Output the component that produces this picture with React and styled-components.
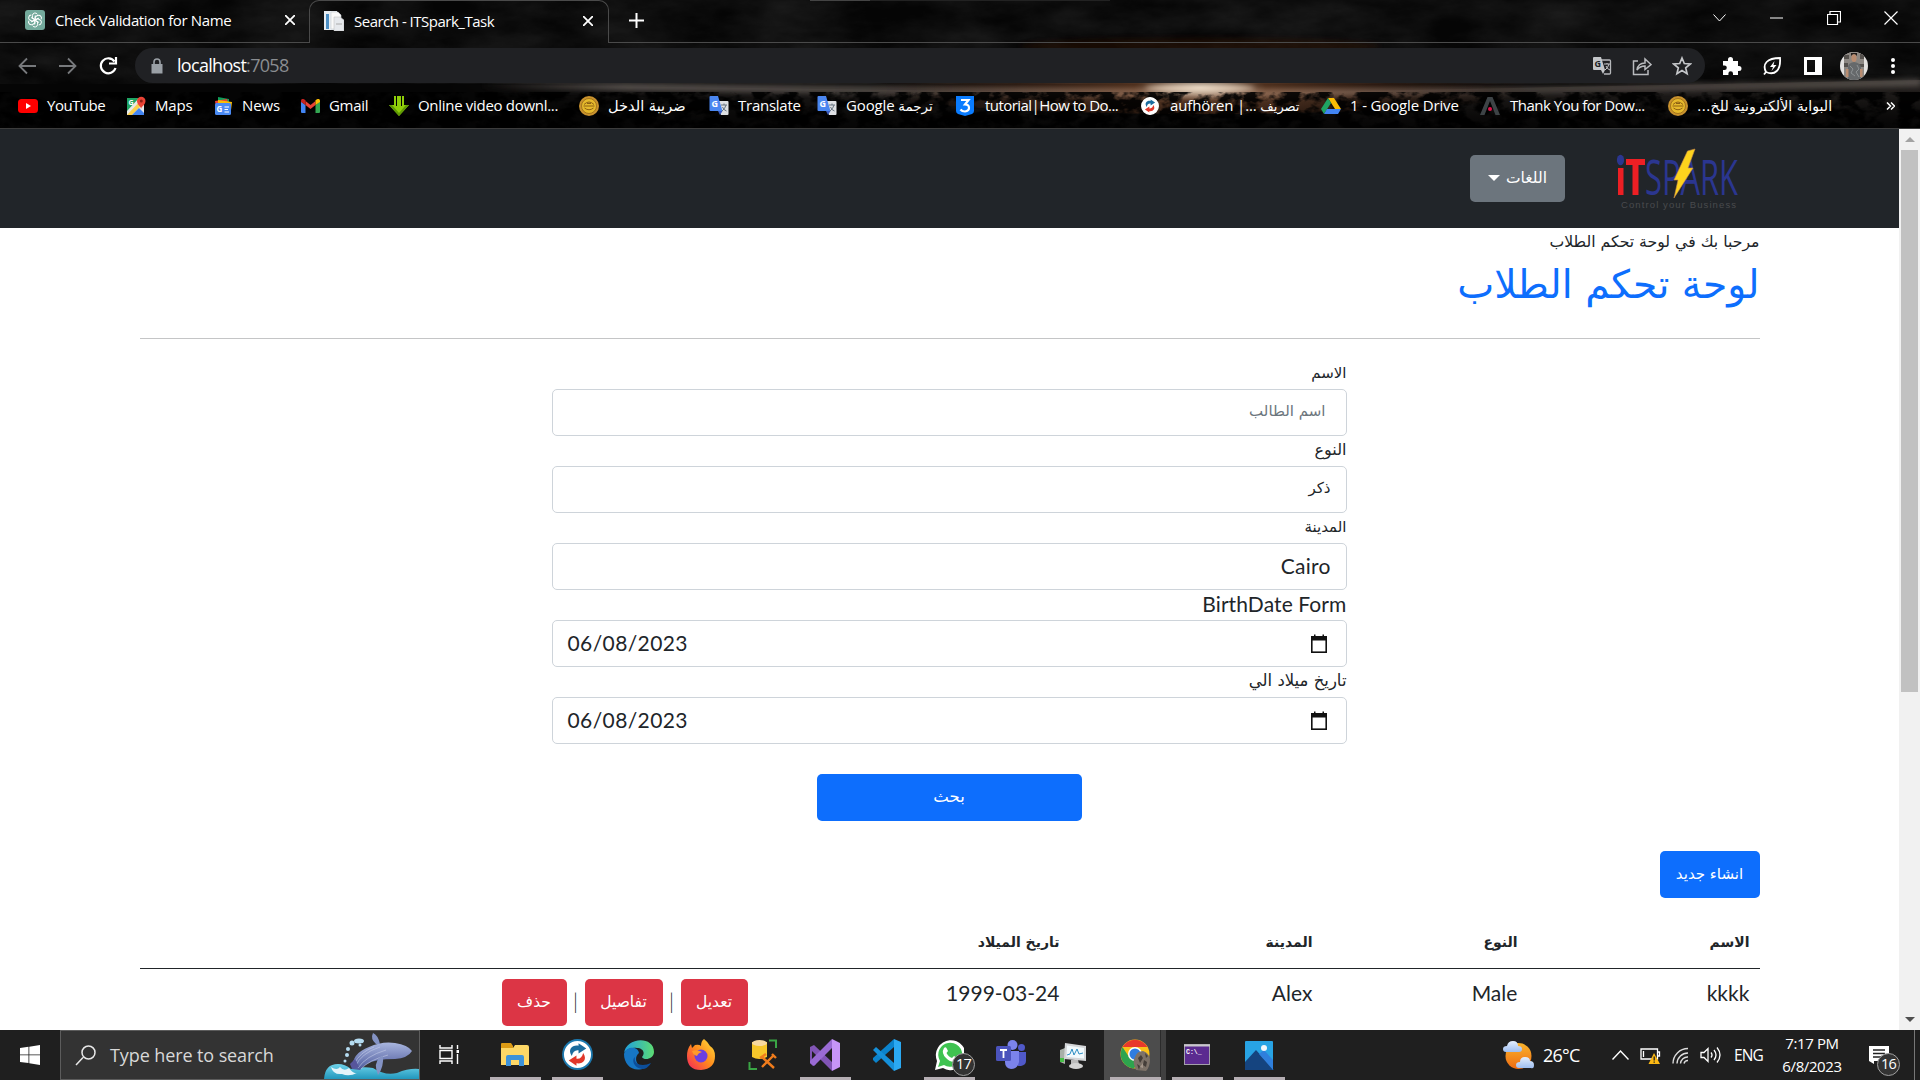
import React from "react";
import styled, { createGlobalStyle, css } from "styled-components";

const UI = `"Open Sans", "Noto Sans", "DejaVu Sans", sans-serif`;
const PAGE = `Lato, "DejaVu Sans", sans-serif`;
const ARABIC = `"DejaVu Sans", sans-serif`;

const Global = createGlobalStyle`
  *, *::before, *::after { box-sizing: border-box; }
  html, body { margin: 0; padding: 0; background: #000; overflow: hidden; }
  svg { display: block; flex: none; direction: ltr; }
`;

const Screen = styled.div`
  width: 1920px;
  height: 1080px;
  display: flex;
  flex-direction: column;
  overflow: hidden;
  font-family: ${UI};
`;

/* ---------- browser chrome ---------- */
const Chrome = styled.header`
  position: relative;
  height: 129px;
  flex: none;
  display: flex;
  flex-direction: column;
  background: #050505;
  color: #fff;
  border-bottom: 1px solid #3c3c3c;
`;
const Backdrop = styled.svg`
  position: absolute;
  inset: 0;
`;
const TabStrip = styled.div`
  position: relative;
  height: 43px;
  display: flex;
`;
const Tab = styled.div`
  height: 43px;
  width: ${(p) => p.$w}px;
  padding: 0 ${(p) => p.$pr}px 2px ${(p) => p.$pl}px;
  display: flex;
  align-items: center;
  gap: 10px;
  font-size: 15px;
  letter-spacing: ${(p) => p.$ls || 0}px;
  white-space: nowrap;
  border: 0 solid #4a4a4a;
  ${(p) =>
    p.$active
      ? css`
          border-width: 1px 1px 0 1px;
          border-radius: 10px 10px 0 0;
        `
      : css`
          border-bottom-width: 1px;
        `}
`;
const TabTitle = styled.span`
  flex: 1;
`;
const StripRest = styled.div`
  flex: 1;
  display: flex;
  align-items: center;
  padding: 0 22px 6px 20px;
  border-bottom: 1px solid #4a4a4a;
`;
const NewTab = styled.div`
  padding-top: 4px;
`;
const Push = styled.div`
  flex: 1;
`;
const WindowControls = styled.div`
  display: grid;
  grid-template-columns: repeat(4, 57px);
  justify-items: center;
  align-items: center;
  margin-right: -21px;
`;
const Toolbar = styled.div`
  position: relative;
  height: 45px;
  padding: 5px 0 5px 16px;
  display: flex;
  align-items: center;
`;
const NavButtons = styled.div`
  display: flex;
  align-items: center;
  gap: 19px;
  width: 119px;
`;
const Omnibox = styled.div`
  width: 1570px;
  height: 35px;
  border-radius: 18px;
  background: #202124;
  display: flex;
  align-items: center;
  padding: 0 13px 0 15px;
  font-size: 18px;
  color: #fff;
`;
const Url = styled.span`
  margin-left: 13px;
  margin-top: -1px;
  letter-spacing: -0.7px;
  flex: 1;
  i {
    font-style: normal;
    color: #8a8d91;
  }
`;
const OmniIcons = styled.div`
  display: flex;
  gap: 20px;
`;
const ExtIcons = styled.div`
  padding-left: 7px;
  display: grid;
  grid-template-columns: 40px 40px 41px 41px 38px;
  justify-items: center;
  align-items: center;
`;
const Bookmarks = styled.nav`
  position: relative;
  height: 40px;
  padding-bottom: 5px;
  padding-left: 18px;
  display: flex;
  align-items: center;
`;
const Bookmark = styled.div`
  width: ${(p) => p.$w}px;
  flex: none;
  display: flex;
  align-items: center;
  gap: ${(p) => p.$gap || 9}px;
  font-size: 15px;
  letter-spacing: ${(p) => p.$ls ?? -0.15}px;
  white-space: nowrap;
  & > span {
    margin-top: -1px;
  }
`;
const ArabicMark = styled.span`
  font-family: ${ARABIC};
  font-size: ${(p) => p.$size || 14}px;
  letter-spacing: 0;
`;

/* ---------- page ---------- */
const Viewport = styled.main`
  height: 901px;
  flex: none;
  display: flex;
  background: #fff;
`;
const Page = styled.div`
  width: 1899px;
  height: 901px;
  overflow: hidden;
  color: #212529;
  font-family: ${PAGE};
  font-size: 21px;
  line-height: 30px;
`;
const Navbar = styled.div`
  height: 99px;
  background: #212529;
  display: flex;
  align-items: center;
  gap: 35px;
  padding: 0 139px;
`;
const Btn = styled.button`
  height: 47px;
  border: 0;
  border-radius: 5px;
  padding: 0 0 2px;
  width: ${(p) => p.$w}px;
  background: ${(p) => p.$bg};
  color: #fff;
  font-family: ${ARABIC};
  font-size: ${(p) => p.$size || 15.5}px;
  display: inline-flex;
  align-items: center;
  justify-content: center;
  gap: 6px;
  white-space: nowrap;
`;
const Caret = styled.span`
  border: 6px solid transparent;
  border-top-color: #fff;
  border-bottom: 0;
`;
const Container = styled.div`
  width: 1620px;
  margin: 0 auto;
`;
const Welcome = styled.div`
  height: 30px;
  font-family: ${ARABIC};
  font-size: 15.7px;
  line-height: 28px;
`;
const Title = styled.h1`
  margin: 0;
  height: 60px;
  font-family: ${ARABIC};
  font-weight: 400;
  font-size: 39.3px;
  line-height: 54px;
  color: #0d6efd;
`;
const Rule = styled.hr`
  margin: 20px 0;
  border: 0;
  height: 1px;
  background: #c4c5c6;
`;
const Form = styled.form`
  width: 795px;
  margin: 0 413px 0 0;
`;
const Label = styled.label`
  display: block;
  height: 30px;
  ${(p) =>
    p.$latin
      ? css`
          line-height: 28px;
          letter-spacing: 0.1px;
        `
      : css`
          font-family: ${ARABIC};
          font-size: ${p.$size || 15}px;
          line-height: 28px;
        `}
`;
const Field = styled.div`
  height: 47px;
  border: 1px solid #ced4da;
  border-radius: 5px;
  padding: 0 ${(p) => (p.$inset ? 20 : 15)}px ${(p) => (p.$arabic ? 3 : 2)}px;
  display: flex;
  align-items: center;
  justify-content: ${(p) => (p.$date ? "space-between" : "flex-start")};
  direction: ${(p) => (p.$date ? "ltr" : "rtl")};
  color: ${(p) => (p.$muted ? "#6c757d" : "#212529")};
  font-family: ${(p) => (p.$arabic ? ARABIC : PAGE)};
  font-size: ${(p) => (p.$arabic ? 15 : 21)}px;
  letter-spacing: ${(p) => (p.$arabic ? 0 : p.$date ? 0.4 : 0.2)}px;
  svg {
    margin: 2px 3px 0 0;
  }
`;
const SubmitRow = styled.div`
  display: flex;
  justify-content: center;
  margin: 30px 0;
`;
const Table = styled.div`
  margin-top: 20px;
`;
const Row = styled.div`
  display: grid;
  grid-template-columns: 232px 205px 253px 312px 618px;
  padding: 10px 0;
  & > div {
    padding: 0 10px;
    height: 30px;
  }
`;
const HeadRow = styled(Row)`
  height: 51px;
  border-bottom: 1px solid #212529;
  font-family: ${ARABIC};
  font-weight: 700;
  font-size: 14px;
  line-height: 28px;
`;
const BodyRow = styled(Row)`
  line-height: 28px;
  letter-spacing: 0.05px;
`;
const Actions = styled.div`
  display: flex;
  align-items: center;
  height: 47px !important;
  span {
    width: 18px;
    text-align: center;
    padding-bottom: 3px;
    font-weight: 300;
  }
`;
const Scrollbar = styled.div`
  width: 21px;
  background: #f1f1f1;
  display: flex;
  flex-direction: column;
  align-items: center;
  padding: 8px 2px 8px;
`;
const Thumb = styled.div`
  width: 17px;
  height: 542px;
  margin-top: 8px;
  background: #c1c1c1;
`;
const ScrollArrow = styled.span`
  border: 5px solid transparent;
  ${(p) =>
    p.$up
      ? css`
          border-top: 0;
          border-bottom-color: #a3a3a3;
        `
      : css`
          border-bottom: 0;
          border-top-color: #505050;
          margin-top: auto;
        `}
`;

/* ---------- taskbar ---------- */
const Taskbar = styled.footer`
  height: 50px;
  flex: none;
  display: flex;
  background: #1f1f1f;
  color: #fff;
`;
const Start = styled.div`
  width: 60px;
  display: grid;
  place-items: center;
`;
const Search = styled.div`
  width: 360px;
  border: 1px solid #5c5c5c;
  background: #333;
  display: flex;
  align-items: center;
  padding-left: 14px;
  color: #d8d8d8;
  font-size: 18px;
  span {
    margin-left: 14px;
    flex: 1;
    letter-spacing: -0.1px;
    white-space: nowrap;
  }
`;
const TaskView = styled.div`
  width: 64px;
  padding: 14px 0 0 19px;
`;
const AppCell = styled.div`
  position: relative;
  width: 62px;
  display: flex;
  flex-direction: column;
  align-items: center;
  justify-content: space-between;
  padding-top: 9px;
  background: ${(p) => (p.$focus ? "linear-gradient(90deg,#4c4c4c 56px,#2b2b2b 56px,#2b2b2b 57px,#404040 57px)" : "none")};
`;
const Underline = styled.div`
  width: 51px;
  height: 3px;
  background: ${(p) => (p.$on ? "#b5aeb3" : "transparent")};
`;
const Badge = styled.div`
  position: absolute;
  left: ${(p) => p.$x}px;
  top: 23px;
  width: 23px;
  height: 23px;
  border-radius: 50%;
  border: 1px solid #a0a0a0;
  background: #333;
  font-size: 14.5px;
  line-height: 20px;
  text-align: center;
  letter-spacing: -0.8px;
`;
const Tray = styled.div`
  margin-left: auto;
  width: 417px;
  display: flex;
  align-items: center;
  font-size: 17px;
  white-space: nowrap;
  & > * {
    flex: none;
  }
`;
const Temp = styled.span`
  width: 78px;
  padding-left: 9px;
  font-size: 18px;
  letter-spacing: -0.8px;
`;
const TrayIcons = styled.div`
  display: flex;
  align-items: center;
  gap: 11px;
`;
const Lang = styled.span`
  font-size: 15.5px;
  margin-left: 13px;
  width: 39px;
  letter-spacing: -0.9px;
`;
const Clock = styled.div`
  width: 78px;
  text-align: center;
  font-size: 15px;
  line-height: 23px;
  letter-spacing: -0.4px;
`;
const Notify = styled.div`
  position: relative;
  width: 64px;
  height: 50px;
  padding: 16px 0 0 18px;
  border-right: 1px solid #777;
`;

/* ---------- drawings ---------- */
const Smoke = () => (
  <Backdrop width="1920" height="128" viewBox="0 0 1920 128">
    <defs>
      <filter id="smoke" x="0" y="0" width="100%" height="100%">
        <feTurbulence type="fractalNoise" baseFrequency="0.012 0.03" numOctaves="7" seed="4" />
        <feColorMatrix values="0 0 0 0 .35  0 0 0 0 .35  0 0 0 0 .35  .6 0 0 0 -.15" />
      </filter>
      <filter id="crowd" x="0" y="0" width="100%" height="100%">
        <feTurbulence type="fractalNoise" baseFrequency="0.05 0.08" numOctaves="4" seed="9" />
        <feColorMatrix values="0 0 0 0 0  0 0 0 0 0  0 0 0 0 0  5 0 0 0 -1.8" />
      </filter>
      <filter id="soft" x="-5%" y="-60%" width="110%" height="220%">
        <feGaussianBlur stdDeviation="2.5" />
      </filter>
      <linearGradient id="band">
        <stop offset="0" stopColor="#67605c" stopOpacity="0" />
        <stop offset=".1" stopColor="#67605c" />
        <stop offset=".3" stopColor="#564f4a" />
        <stop offset=".52" stopColor="#c0aa9a" />
        <stop offset=".7" stopColor="#4c4440" />
        <stop offset="1" stopColor="#5d5752" />
      </linearGradient>
      <radialGradient id="sun" cx="1200" cy="88" r="330" gradientUnits="userSpaceOnUse" gradientTransform="translate(0 70) scale(1 .2)">
        <stop offset="0" stopColor="#fff3e0" />
        <stop offset=".2" stopColor="#8a5230" stopOpacity=".75" />
        <stop offset="1" stopColor="#4a1c08" stopOpacity="0" />
      </radialGradient>
      <linearGradient id="fade">
        <stop offset="0" stopColor="#fff" stopOpacity="0" />
        <stop offset=".3" stopColor="#fff" />
      </linearGradient>
      <mask id="fadeLeft"><rect x="440" width="1480" height="128" fill="url(#fade)" /></mask>
      <linearGradient id="ground" x2="0" y2="1">
        <stop offset="0" stopColor="#5c534e" stopOpacity=".8" />
        <stop offset="1" stopColor="#0c0a09" stopOpacity=".3" />
      </linearGradient>
    </defs>
    <rect width="1920" height="84" filter="url(#smoke)" opacity=".38" />
    <ellipse cx="1200" cy="46" rx="180" ry="8" fill="#3a1206" filter="url(#soft)" opacity=".35" />
    <path d="M440 84 L1200 94 L1920 80 V128 H440Z" fill="url(#ground)" opacity=".6" mask="url(#fadeLeft)" />
    <path d="M480 81 Q850 85 1200 89 Q1600 87 1920 79 V86 Q1600 93 1200 98 Q850 94 480 89Z" fill="url(#band)" filter="url(#soft)" opacity=".75" />
    <ellipse cx="1200" cy="88" rx="340" ry="26" fill="url(#sun)" opacity=".7" />
    <ellipse cx="1200" cy="88" rx="55" ry="3.500" fill="#ffe9d0" filter="url(#soft)" opacity=".7" />
    <rect y="92" width="1920" height="36" filter="url(#crowd)" opacity=".9" />
    <path d="M810 .5H870" stroke="#444" />
    <path d="M870 .5H1110" stroke="#222" />
  </Backdrop>
);

const Line = ({ w, h = w, d, c = "#fff", s = 1.6, vb }) => (
  <svg width={w} height={h} viewBox={vb || `0 0 ${w} ${h}`} fill="none" stroke={c} strokeWidth={s}>
    <path d={d} />
  </svg>
);

const GptIcon = () => (
  <svg width="20" height="20" viewBox="0 0 20 20">
    <rect width="20" height="20" rx="3" fill="#74aa9c" />
    <g fill="none" stroke="#fff" strokeWidth="1">
      {[0, 60, 120, 180, 240, 300].map((a) => (
        <path key={a} transform={`rotate(${a} 10 10)`} d="M7.4 8.6V5.6a2.7 2.7 0 0 1 5-1.3M7.4 8.4l3 1.7 3.6-2.1" />
      ))}
    </g>
  </svg>
);
const DocIcon = () => (
  <svg width="20" height="20" viewBox="0 0 20 20">
    <rect x="0" y="0" width="13" height="19" fill="#e8edf2" />
    <rect x="2" y="3" width="3" height="15" fill="#4d8fc4" />
    <path d="M7 1h7l3 3v14H7z" fill="#fafafa" stroke="#c8ccd2" strokeWidth=".6" />
    <path d="M10 6h6l4 3v11H10z" fill="#e6e9ed" stroke="#bbb" strokeWidth=".5" />
    <path d="M12 13h6" stroke="#aaa" />
  </svg>
);
const YouTube = () => (
  <svg width="20" height="20" viewBox="0 0 20 20">
    <rect y="3" width="20" height="14" rx="3.5" fill="#f00" />
    <path d="M8 7v6l5-3z" fill="#fff" />
  </svg>
);
const MapsIcon = () => (
  <svg width="19" height="20" viewBox="0 0 19 20">
    <path d="M0 2h17v17H0z" fill="#e8e8e8" />
    <path d="M0 2h12L0 15z" fill="#1fa463" />
    <path d="M0 19 15 3l2 2v2L5 19z" fill="#fbd04b" />
    <path d="m5 19 7-7 5 5v2z" fill="#4285f4" />
    <text x="1.500" y="9" fontSize="7" fontWeight="700" fill="#fff" fontFamily="Open Sans">G</text>
    <path d="M14 13c0-3-4-4-4-8a4 4 0 0 1 8.500 0c0 4-4 5-4.500 8z" fill="#ea4335" />
    <circle cx="14.300" cy="5" r="1.500" fill="#8c1f16" />
  </svg>
);
const NewsIcon = () => (
  <svg width="19" height="20" viewBox="0 0 19 20">
    <path d="M4 1l11 2v6H4z" fill="#0f9d58" />
    <path d="m1 5 12-2 2 8H2z" fill="#ea4335" />
    <path d="m4 4 14 2-1 8H4z" fill="#fbbc04" />
    <rect x="1" y="7" width="16" height="12" rx="1.500" fill="#4a8af4" />
    <text x="2.500" y="16" fontSize="8" fontWeight="700" fill="#fff" fontFamily="Open Sans">G</text>
    <path d="M10.500 11h4.500M10.500 13.500h3.500M10.500 16h4.500" stroke="#fff" strokeWidth="1.200" />
  </svg>
);
const GmailIcon = () => (
  <svg width="19" height="20" viewBox="0 0 19 20">
    <path d="M0 5.500V16q0 1 1 1h3.500V9z" fill="#4285f4" />
    <path d="M19 5.500V16q0 1-1 1h-3.500V9z" fill="#34a853" />
    <path d="M4.500 9V5l5 4 5-4v4l-5 4z" fill="#ea4335" />
    <path d="M0 5c0-2.500 2.500-2.500 4.500-.5V9L0 6z" fill="#c5221f" />
    <path d="M19 5c0-2.500-2.500-2.500-4.500-.5V9L19 6z" fill="#fbbc04" />
  </svg>
);
const DownIcon = () => (
  <svg width="20" height="20" viewBox="0 0 20 20">
    <path d="M5 0h2v10h1V0h4v10h1V0h2v9h5L10 20 0 9h5z" fill="#8fce0a" />
    <path d="m0 9 10 11L20 9h-3l-7 8-7-8z" fill="#5f9a04" />
  </svg>
);
const Coin = () => (
  <svg width="20" height="20" viewBox="0 0 20 20">
    <circle cx="10" cy="10" r="10" fill="#c9922e" />
    <circle cx="10" cy="10" r="7.500" fill="#e6b92c" stroke="#8d6113" strokeWidth=".7" />
    <path d="M5 8.500q5-5 10 0M4.500 10h11M5.500 12q4.500 3.500 9 0M8 7.500h4" stroke="#8d6113" fill="none" />
  </svg>
);
const TranslateIcon = () => (
  <svg width="20" height="20" viewBox="0 0 20 20">
    <path d="M7 5h11.500q1 0 1 1v12q0 1-1 1H12z" fill="#dfe1e4" />
    <path d="M1.500 0H9l4.500 15H1.500Q.5 15 .5 14V1q0-1 1-1z" fill="#4a86f0" />
    <path d="m9 15h4.500L11 19z" fill="#3a5bc0" />
    <path d="M12 9h6M15 7.500V9M17 9q-1 4-4 6M13.500 11q1 3 4 4" stroke="#687580" fill="none" />
    <text x="2.400" y="11" fontSize="9" fontWeight="700" fill="#fff" fontFamily="Open Sans">G</text>
  </svg>
);
const ShieldIcon = () => (
  <svg width="18" height="20" viewBox="0 0 18 20">
    <path d="M0 0h18v15q0 2-2 3l-7 2-7-2q-2-1-2-3z" fill="#0a7cff" />
    <path d="M5 4h7.500L9 8.500q4 0 4 3.300T9 15.500q-3 0-4.500-2" stroke="#fff" strokeWidth="2.200" fill="none" />
  </svg>
);
const SyncIcon = ({ size = 18, ring }) => (
  <svg width={size} height={size} viewBox="0 0 30 30">
    <circle cx="15" cy="15" r="14" fill="#fff" stroke={ring ? "#1c78ae" : "#fff"} strokeWidth="1.800" />
    <path d="M9.500 16.500C5 10 10 5.500 16 6.500V4l7.500 5.200L16 14v-3c-3.500-.5-5.500 1.500-6.500 5.500z" fill="#1b6c9e" />
    <path d="M20.500 13.500C25 20 20 24.500 14 23.500V26l-7.500-5.200L14 16v3c3.500.5 5.500-1.500 6.500-5.500z" fill="#e1372a" />
  </svg>
);
const DriveIcon = () => (
  <svg width="20" height="20" viewBox="0 0 20 20">
    <path d="M7 2h6l7 11h-6z" fill="#fbbc04" />
    <path d="M7 2 0 13l3 5L10 7z" fill="#1fa463" />
    <path d="M6 13h14l-3 5H3z" fill="#4285f4" />
  </svg>
);
const AIcon = () => (
  <svg width="20" height="20" viewBox="0 0 20 20">
    <path d="M7.500 1h5L20 19h-4.500L10 5 4.500 19H0z" fill="#3d4346" />
    <circle cx="10" cy="13" r="2" fill="#e0104a" />
  </svg>
);
const Avatar = () => (
  <svg width="28" height="28" viewBox="0 0 28 28">
    <defs><clipPath id="av"><circle cx="14" cy="14" r="14" /></clipPath></defs>
    <g clipPath="url(#av)">
      <rect width="28" height="28" fill="#e4e2e0" />
      <path d="M4 0h20v28H4z" fill="#8c8782" />
      <path d="M4 3h5v4H4zM20 2h4v5h-4zM4 11h4v4H4zM19 12h5v3h-5z" fill="#55514d" />
      <path d="M8 28V15q0-4 6-5 7 1 7 6v12z" fill="#66696b" />
      <path d="M10 14l3 3-2 4 4 3M17 13l2 4-3 3 3 5" stroke="#8d9193" fill="none" />
      <ellipse cx="14" cy="6" rx="2.600" ry="4" fill="#b98c70" />
      <path d="M11 4q3-4 6 0v-3h-6z" fill="#221d1a" />
      <path d="M6 17h2.500v8H6zM20 17h2.500v8H20z" fill="#b98c70" />
    </g>
  </svg>
);
const Logo = () => (
  <svg width="160" height="80" viewBox="0 0 160 80">
    <ellipse cx="20.500" cy="21" rx="3.600" ry="5.200" fill="#2b3690" />
    <path d="M18 29h5.500v27H18zM26 20h19v6h-6.500v30h-6V26H26z" fill="#ed1f24" />
    <text x="45" y="56" fontSize="50" textLength="93" lengthAdjust="spacingAndGlyphs" fontFamily="Open Sans" fill="#2b3690">SPARK</text>
    <path d="M87.500 12 95 10l-7 19h5L74 59l4-18h-4z" fill="#fdd31d" stroke="#c98b4a" strokeWidth=".6" />
    <text x="21" y="68.500" fontSize="9.500" textLength="115" fontFamily="Liberation Sans" fill="#494b4e">Control your Business</text>
  </svg>
);
const Calendar = () => (
  <svg width="18" height="20" viewBox="0 0 18 20">
    <path d="M1 2h16V19H1zM4 .5h1.500V3H4zM12.500 .5H14V3h-1.500z" fill="#111" />
    <path d="M2.600 6.500h12.800V17.400H2.600z" fill="#fff" />
  </svg>
);
const Whale = () => (
  <svg width="95" height="48" viewBox="0 0 95 48">
    <defs>
      <linearGradient id="sea" x2="0" y2="1"><stop offset="0" stopColor="#6fd3ea" /><stop offset="1" stopColor="#2197bd" /></linearGradient>
      <linearGradient id="whale" x2="0" y2="1"><stop offset="0" stopColor="#a9b6df" /><stop offset="1" stopColor="#4d5a9c" /></linearGradient>
    </defs>
    <path d="M0 48Q1 33 14 33q7 0 13 5 12-3 22-1 12 8 24 5 12-5 22-4v10z" fill="url(#sea)" />
    <path d="M28 38q0-16 17-22 13-6 26-4 13 2 17 8-4 7-17 8-20 0-28 5-5 3-7 6z" fill="url(#whale)" />
    <path d="M31 36q6-14 25-20M34 37q8-12 28-18M37 38q8-9 27-14M30 33q6-12 20-17" stroke="#c3cbe8" strokeWidth=".6" fill="none" />
    <path d="M52 13q-6-5-3-11 5 2 7 11zM56 26q-7 6-2 18 6-8 5-19z" fill="#8493c4" />
    <path d="M26 33l2 5 7-2-4-8z" fill="#57559c" />
    <path d="M7 36q6 4 9 0 4 5 9 1 4 6 8 5-8 4-15 1-9 1-11-7z" fill="#e4f4fa" />
    <g fill="#b5dcf1"><ellipse cx="35" cy="10" rx="5" ry="2.500" /><circle cx="28" cy="12" r="2.500" /><circle cx="24" cy="18" r="2" /><circle cx="23" cy="24" r="2" /><circle cx="21" cy="30" r="1.500" /><circle cx="36" cy="14" r="1.500" /></g>
  </svg>
);

const I = ({ children }) => <svg width="30" height="32" viewBox="0 0 30 32">{children}</svg>;
const Explorer = () => (
  <I>
    <path d="M1 5q0-1 1-1h9l2 3v5H1z" fill="#dc9a14" />
    <path d="M1 9h12l2-3h12q2 0 2 2v18H1z" fill="#fdd766" />
    <path d="M6 27V18q0-2 2-2h14q2 0 2 2v9h-5v-6h-8v6z" fill="#3d92d9" />
  </I>
);
const Edge = () => (
  <I>
    <defs><linearGradient id="edg" x2="1" y2="0"><stop offset="0" stopColor="#1e9fdf" /><stop offset="1" stopColor="#5ddc73" /></linearGradient></defs>
    <path d="M0 15C1-2 30-4 30 13c0 7-10 9-12 5 4-5 0-9-5-9C6 8 0 12 0 15z" fill="url(#edg)" />
    <path d="M0 15c2-8 14-8 15-1-5 4-4 13 6 15C9 34 0 26 0 15z" fill="#1676c4" />
    <path d="M11 18c-2 8 8 10 16 6-3 5-6 6-9 6-8-1-11-9-7-12z" fill="#0c4e9a" />
  </I>
);
const Firefox = () => (
  <I>
    <defs><linearGradient id="fx" x1="1" x2="0" y2="1"><stop offset="0" stopColor="#ffe23c" /><stop offset=".5" stopColor="#ff8a1c" /><stop offset="1" stopColor="#f5215e" /></linearGradient></defs>
    <path d="M18 0q4 3 6 7 5 3 5 10 0 13-14 14Q1 31 1 17 1 10 5 5l1 4 3-3q4-1 6 1 0-5 3-7z" fill="url(#fx)" />
    <circle cx="15" cy="17" r="6.500" fill="#6b3fe0" />
    <path d="M6 12q5-2 10 1-4 1-5 4-4-1-5-5z" fill="#ff9a2a" />
  </I>
);
const SqlTools = () => (
  <I>
    <path d="M4 3v15q7 4 15 0V3z" fill="#f6c62a" />
    <ellipse cx="11.500" cy="4" rx="7.500" ry="3" fill="#f7d9a0" />
    <path d="M21 1.500h7V9M1.500 23v7H9" stroke="#3aa545" strokeWidth="2" fill="none" />
    <path d="M14 18l12 11M25 17 14 28M12 19l6-4M24 15l4 4" stroke="#f07c1c" strokeWidth="2.400" />
  </I>
);
const VisualStudio = () => (
  <I>
    <path d="M0 8l4-2 18 17v9L2 12v10l4 3-3 2-3-3z" fill="#8155b5" />
    <path d="M22 0v9L4 27l-4-3v-2z" fill="#9a6bd4" />
    <path d="M22 0l8 4v24l-8 4z" fill="#c695f8" />
  </I>
);
const VsCode = () => (
  <I>
    <path d="M22 0v8L4 24l-3-3v-2z" fill="#0b83cc" />
    <path d="M1 11l3-3 18 16v8z" fill="#1590da" />
    <path d="M22 0l7 3v26l-7 3z" fill="#2ba9f2" />
  </I>
);
const WhatsApp = () => (
  <I>
    <path d="M1 31l2-9A15 15 0 1 1 9 29z" fill="#fff" />
    <path d="M4 28l2-6a12 12 0 1 1 4 4z" fill="#3fc351" />
    <path d="M10 9q2-2 3 1l1 2-1.500 2q2 4 5.500 5l2-2 3 2q1 2-2 3.500-5 1-9-3.500-5-5-2-10z" fill="#fff" />
  </I>
);
const Teams = () => (
  <I>
    <circle cx="25.500" cy="8.500" r="3.500" fill="#5059c9" /><circle cx="16.500" cy="6" r="5" fill="#7b83eb" />
    <path d="M22 13h8v9q0 4-5 5h-3z" fill="#5059c9" /><path d="M9 12h14v11q-1 7-8 7-6-1-6-7z" fill="#7b83eb" />
    <rect y="7" width="15" height="15" rx="1.500" fill="#4b53bc" />
    <path d="M4 11h7M7.500 11v8" stroke="#fff" strokeWidth="1.800" />
  </I>
);
const Monitor = () => (
  <I>
    <path d="M2 11l5-2v16l-5-2z" fill="#a8b0a8" /><path d="M2 19h4v4H2z" fill="#48c048" />
    <path d="M7 4l21 3v15L6 20z" fill="#d4d6d8" /><path d="M9 6.500l17 2.500v10.500L8.500 18z" fill="#f2fafd" />
    <path d="M9 16l3-1 2-5 2 6 3-6 2 5 4-1" stroke="#2e8fc4" fill="none" />
    <path d="M13 21h7l1 4h-8z" fill="#bbb" /><ellipse cx="18" cy="27" rx="7" ry="3" fill="#d4d4d4" />
  </I>
);
const ChromeIcon = () => (
  <I>
    <circle cx="15" cy="15" r="14.500" fill="#fbc118" />
    <path d="M2.500 8a14.500 14.500 0 0 1 25 0H15z" fill="#e8392b" />
    <path d="M2.500 8A14.500 14.500 0 0 0 14 29.500L21 18 9 18z" fill="#2da44e" />
    <circle cx="15" cy="15" r="7" fill="#fff" /><circle cx="15" cy="15" r="5.500" fill="#2f7de1" />
    <path d="M16 31q-4-8-1-13 2-6 8-6 6 2 7 8 0 8-4 12z" fill="#7d7268" />
    <path d="M18 19l3-3 2 3-3 5zM24 21l3 2-1 5-3-2zM17 25l3 2-1 4zM25 14l3 3-2 2z" fill="#453e39" /><path d="M20 28l3-4v5z" fill="#a6978b" />
  </I>
);
const Terminal = () => (
  <I>
    <rect x="2.500" y="5.500" width="25" height="20" fill="#5b2b90" stroke="#a3a0a8" />
    <path d="M2 6.500h26" stroke="#c9c7cc" strokeWidth="2" />
    <text x="4" y="15" fontSize="6.500" fontWeight="700" fill="#fff" fontFamily="Liberation Mono">C:\_</text>
  </I>
);
const Photos = () => (
  <I>
    <rect x="1" y="2" width="28" height="29" rx="1" fill="#28a3e4" />
    <path d="M1 23 12 11l18 20H1z" fill="#15447f" /><path d="M15 15l5-4 9 10v10z" fill="#2f7fdc" />
    <circle cx="20" cy="9" r="3" fill="#f3f6fa" />
  </I>
);

const APPS = [
  { icon: <Explorer />, on: true },
  { icon: <SyncIcon size={31} ring />, on: true },
  { icon: <Edge /> },
  { icon: <Firefox /> },
  { icon: <SqlTools /> },
  { icon: <VisualStudio />, on: true },
  { icon: <VsCode /> },
  { icon: <WhatsApp />, on: true, badge: 17 },
  { icon: <Teams /> },
  { icon: <Monitor /> },
  { icon: <ChromeIcon />, on: true, focus: true },
  { icon: <Terminal />, on: true },
  { icon: <Photos />, on: true },
];

const MARKS = [
  { w: 109, icon: <YouTube />, text: "YouTube", ls: -0.5 },
  { w: 87, icon: <MapsIcon />, text: "Maps" },
  { w: 87, icon: <NewsIcon />, text: "News" },
  { w: 88, icon: <GmailIcon />, text: "Gmail", ls: -0.3 },
  { w: 190, icon: <DownIcon />, text: "Online video downl...", ls: -0.3 },
  { w: 130, icon: <Coin />, ar: "ضريبة الدخل", size: 14.6 },
  { w: 108, icon: <TranslateIcon />, text: "Translate", ls: -0.25 },
  { w: 139, icon: <TranslateIcon />, text: "Google ", ar: "ترجمة", size: 13.5 },
  { w: 185, icon: <ShieldIcon />, text: "tutorial|How to Do...", gap: 11, ls: -0.55 },
  { w: 180, icon: <SyncIcon />, text: "aufhören |... ", ar: "تصريف", gap: 11, size: 13 },
  { w: 159, icon: <DriveIcon />, text: "1 - Google Drive" },
  { w: 188, icon: <AIcon />, text: "Thank You for Dow...", gap: 10, ls: -0.5 },
  { w: 218, icon: <Coin />, ar: "البوابة الألكترونية للخ...", rtl: true, size: 14.2 },
];

export default function App() {
  return (
    <Screen>
      <Global />
      <Chrome>
        <Smoke />
        <TabStrip>
          <Tab $w={309} $pl={25} $pr={14} $ls={-0.38}>
            <GptIcon />
            <TabTitle>Check Validation for Name</TabTitle>
            <Line w={10} d="M0 0 10 10M10 0 0 10" s={1.8} />
          </Tab>
          <Tab $w={300} $pl={14} $pr={15} $active $ls={-0.5}>
            <DocIcon />
            <TabTitle>Search - ITSpark_Task</TabTitle>
            <Line w={10} d="M0 0 10 10M10 0 0 10" s={1.8} />
          </Tab>
          <StripRest>
            <NewTab>
              <Line w={15} d="M7.500 0V15M0 7.500H15" s={2} />
            </NewTab>
            <Push />
            <WindowControls>
              <Line w={13} h={8} d="M.5.5 6.500 7 12.500.5" s={1} />
              <Line w={13} h={2} d="M0 1H13" s={1} />
              <Line w={14} d="M.5 3.500H10.500V13.500H.5zM3 3V.5H13.500V11H11" s={1.2} />
              <Line w={14} d="M.5.5 13.500 13.500M13.500.5.5 13.500" s={1.2} />
            </WindowControls>
          </StripRest>
        </TabStrip>
        <Toolbar>
          <NavButtons>
            <Line w={22} h={18} d="M20 9H4M11 1.500 3.500 9 11 16.500" c="#77797c" s={1.8} />
            <Line w={22} h={18} d="M2 9H18M11 1.500 18.500 9 11 16.500" c="#77797c" s={1.8} />
            <Line w={20} d="M16.500 5.500A7.500 7.500 0 1 0 17.500 12M18 1V7.500H11" s={2.2} />
          </NavButtons>
          <Omnibox>
            <svg width="14" height="16" viewBox="0 0 14 16">
              <path d="M1.500 6h11v9.500h-11z" fill="#9aa0a6" />
              <path d="M4 6.500V4a3 3 0 0 1 6 0v2.500" stroke="#9aa0a6" strokeWidth="1.600" fill="none" />
            </svg>
            <Url>localhost<i>:7058</i></Url>
            <OmniIcons>
              <svg width="20" height="20" viewBox="0 0 20 20">
                <path d="M8 4h9.500q1 0 1 1v12q0 1-1 1H12" fill="none" stroke="#b5b7ba" strokeWidth="1.300" />
                <path d="M2 1h7l4 13H2q-1 0-1-1V2q0-1 1-1zM9 14h4l-2 4z" fill="#c4c6c9" />
                <path d="M12 8h6M15 7v1M17 8q-1 4-4 6M14 10q1 3 4 4" stroke="#c4c6c9" fill="none" />
                <text x="2.500" y="10.500" fontSize="9" fontWeight="700" fill="#202124" fontFamily="Open Sans">G</text>
              </svg>
              <Line w={20} c="#b9bbbe" d="M6 5H1.500V18.500H16V14M5 14Q6 7 13 7V3L19 8.500 13 13.500V10Q8 10 5 14Z" s={1.5} />
              <Line w={20} c="#c4c6c9" d="M10 2l2.300 5.500 6 .5-4.600 3.900 1.400 5.800L10 14.600 4.900 17.700l1.400-5.800L1.700 8l6-.5z" s={1.7} />
            </OmniIcons>
          </Omnibox>
          <ExtIcons>
            <svg width="20" height="20" viewBox="0 0 20 20">
              <path d="M1 5h5V3.500a2.500 2.500 0 0 1 5 0V5h5v5h1a2.500 2.500 0 0 1 0 5h-1v4h-5v-1.500a2.300 2.300 0 0 0-4.600 0V19H1v-5h1.500a2.300 2.300 0 0 0 0-4.600H1z" fill="#fff" />
            </svg>
            <svg width="20" height="20" viewBox="0 0 20 20" fill="none" stroke="#fff" strokeWidth="1.800">
              <path d="M4 16C0 8 5 2 18 2c1 12-5 18-14 14zM4 16l-2 2.500" />
              <path d="M12.500 5 8 11h3l-1.500 4 5-6h-3z" fill="#fff" stroke="none" />
            </svg>
            <svg width="20" height="20" viewBox="0 0 20 20"><path d="M1 1h18v18H1zM4 4v12h8V4z" fillRule="evenodd" fill="#fff" /></svg>
            <Avatar />
            <svg width="6" height="18" viewBox="0 0 6 18" fill="#fff"><circle cx="3" cy="3" r="2" /><circle cx="3" cy="9" r="2" /><circle cx="3" cy="15" r="2" /></svg>
          </ExtIcons>
        </Toolbar>
        <Bookmarks>
          {MARKS.map((m, i) => (
            <Bookmark key={i} $w={m.w} $gap={m.gap} $ls={m.ls}>
              {m.icon}
              <span dir={m.rtl ? "rtl" : "ltr"}>
                {m.text}
                {m.ar && <ArabicMark $size={m.size}>{m.ar}</ArabicMark>}
              </span>
            </Bookmark>
          ))}
          <Line w={9} h={8} d="M1 .5 4.500 4 1 7.500M5 .5 8.500 4 5 7.500" s={1.5} />
        </Bookmarks>
      </Chrome>

      <Viewport>
        <Page dir="rtl">
          <Navbar>
            <Logo />
            <Btn $w={95} $bg="#6c757d">
              اللغات
              <Caret />
            </Btn>
          </Navbar>
          <Container>
            <Welcome>مرحبا بك في لوحة تحكم الطلاب</Welcome>
            <Title>لوحة تحكم الطلاب</Title>
            <Rule />
            <Form>
              <Label>الاسم</Label>
              <Field $arabic $muted $inset>اسم الطالب</Field>
              <Label $size={16}>النوع</Label>
              <Field $arabic>ذكر</Field>
              <Label>المدينة</Label>
              <Field>Cairo</Field>
              <Label $latin>BirthDate Form</Label>
              <Field $date>06/08/2023<Calendar /></Field>
              <Label $size={16.5}>تاريخ ميلاد الي</Label>
              <Field $date>06/08/2023<Calendar /></Field>
              <SubmitRow>
                <Btn type="button" $w={265} $bg="#0d6efd" $size={16.5}>بحث</Btn>
              </SubmitRow>
            </Form>
            <Btn $w={100} $bg="#0d6efd" $size={15}>انشاء جديد</Btn>
            <Table>
              <HeadRow>
                <div>الاسم</div>
                <div>النوع</div>
                <div>المدينة</div>
                <div>تاريخ الميلاد</div>
                <div />
              </HeadRow>
              <BodyRow>
                <div>kkkk</div>
                <div>Male</div>
                <div>Alex</div>
                <div>1999-03-24</div>
                <Actions>
                  <Btn $w={67} $bg="#dc3545">تعديل</Btn>
                  <span>|</span>
                  <Btn $w={78} $bg="#dc3545">تفاصيل</Btn>
                  <span>|</span>
                  <Btn $w={65} $bg="#dc3545">حذف</Btn>
                </Actions>
              </BodyRow>
            </Table>
          </Container>
        </Page>
        <Scrollbar>
          <ScrollArrow $up />
          <Thumb />
          <ScrollArrow />
        </Scrollbar>
      </Viewport>

      <Taskbar>
        <Start>
          <svg width="20" height="20" viewBox="0 0 20 20"><path d="M0 3l8.500-1.200v7.700H0zM9.300 1.700 20 0v9.500H9.300zM0 10.300h8.500v7.800L0 17zM9.300 10.300H20V20L9.300 18.300z" fill="#fff" /></svg>
        </Start>
        <Search>
          <Line w={21} d="M1 20 8 12.500M20 7.500A6.500 6.500 0 1 1 7 7.500 6.500 6.500 0 0 1 20 7.500z" c="#e8e8e8" s={1.5} />
          <span>Type here to search</span>
          <Whale />
        </Search>
        <TaskView>
          <svg width="21" height="21" viewBox="0 0 21 21" fill="none" stroke="#fff" strokeWidth="1.400">
            <path d="M1 1v3h12V1M1 6.500h12v8H1zM1 20v-3h12v3M18.500 1v4M18.500 10v10" /><path d="M17.500 7.500h2.500" strokeWidth="3" />
          </svg>
        </TaskView>
        {APPS.map((a, i) => (
          <AppCell key={i} $focus={a.focus}>
            {a.icon}
            <Underline $on={a.on} />
            {a.badge && <Badge $x={34}>{a.badge}</Badge>}
          </AppCell>
        ))}
        <Tray>
          <svg width="31" height="30" viewBox="0 0 31 30">
            <defs>
              <linearGradient id="sunny" x2="0" y2="1"><stop offset="0" stopColor="#f9b42c" /><stop offset="1" stopColor="#ee6a12" /></linearGradient>
              <linearGradient id="cloud" x2="0" y2="1"><stop offset="0" stopColor="#e4eefc" /><stop offset="1" stopColor="#9dbdf0" /></linearGradient>
            </defs>
            <circle cx="15.500" cy="16" r="13" fill="url(#sunny)" />
            <path d="M3 12Q0 12 0 9q0-3 4-3 1-5 6-5t5 5q4 0 4 3t-3 3z" fill="url(#cloud)" />
            <path d="M16 28q-3 0-3-3t4-3q0-5 5-5t5 4q4 0 4 4t-3 3z" fill="url(#cloud)" />
          </svg>
          <Temp>26°C</Temp>
          <TrayIcons>
            <Line w={17} h={10} d="M.5 9.500 8.500 1 16.500 9.500" s={1.4} />
            <svg width="21" height="18" viewBox="0 0 21 18">
              <path d="M1 3h16.500v10H1zM18 6h1.500v4H18M3.500 5v6" fill="none" stroke="#fff" strokeWidth="1.300" />
              <path d="M14 7l6 11H8.500z" fill="#fcb813" /><path d="M14.200 10.500v4M14.200 15.500v1.300" stroke="#222" strokeWidth="1.300" />
            </svg>
            <Line w={17} h={17} d="M1 16.500A15 15 0 0 1 16 1.500M5 16.500A11 11 0 0 1 16 6M8.500 16.500A7 7 0 0 1 16 10M12 16.500A4 4 0 0 1 16 13.500" c="#ddd" s={1.4} />
            <Line w={21} h={18} d="M1 6.500h3L8 2.500v13L4 11.500H1zM11 6.500q2 2.500 0 5M14 4q4 5 0 10M17 1.500q6 7.500 0 15" s={1.3} />
          </TrayIcons>
          <Lang>ENG</Lang>
          <Clock>
            7:17 PM
            <br />
            6/8/2023
          </Clock>
          <Notify>
            <svg width="21" height="18" viewBox="0 0 21 18"><path d="M0 0h20v15H5v3l-5-3z" fill="#fff" /><path d="M4 4h12M4 7.500h12M4 11h8" stroke="#222" strokeWidth="1.300" /></svg>
            <Badge $x={26}>16</Badge>
          </Notify>
        </Tray>
      </Taskbar>
    </Screen>
  );
}
